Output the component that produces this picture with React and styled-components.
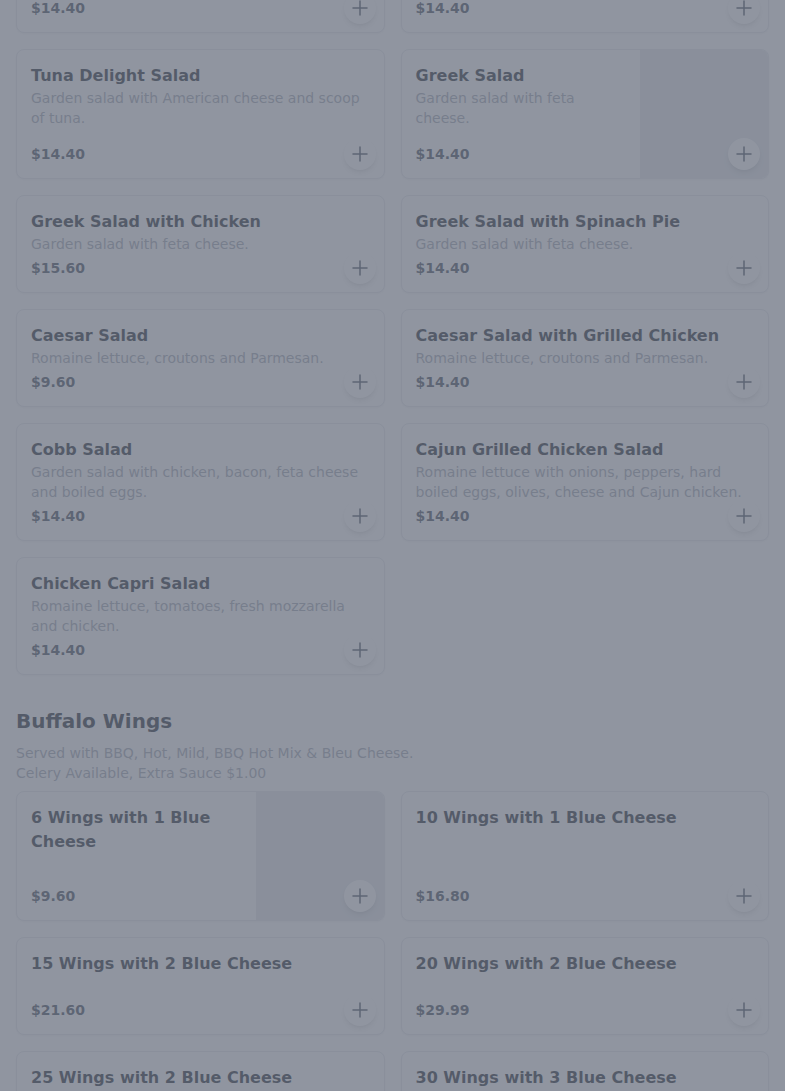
import React, { useLayoutEffect, useRef } from 'react'
import styled, { createGlobalStyle } from 'styled-components'

const GlobalStyle = createGlobalStyle`
  html, body {
    margin: 0;
    padding: 0;
    height: 100%;
    overflow: hidden;
    background: #ffffff;
  }
  * { box-sizing: border-box; }
  #root { height: 100%; }
`

const sections = [
  {
    title: 'Salads',
    note: null,
    items: [
      { name: 'Chef Salad', desc: 'Garden salad with ham, turkey, cheese and boiled eggs.', price: '$14.40' },
      { name: 'Garden Salad with Chicken', desc: 'Garden salad with grilled chicken.', price: '$14.40' },
      { name: 'Tuna Delight Salad', desc: 'Garden salad with American cheese and scoop of tuna.', price: '$14.40', anchor: true },
      { name: 'Greek Salad', desc: 'Garden salad with feta cheese.', price: '$14.40', image: true },
      { name: 'Greek Salad with Chicken', desc: 'Garden salad with feta cheese.', price: '$15.60' },
      { name: 'Greek Salad with Spinach Pie', desc: 'Garden salad with feta cheese.', price: '$14.40' },
      { name: 'Caesar Salad', desc: 'Romaine lettuce, croutons and Parmesan.', price: '$9.60' },
      { name: 'Caesar Salad with Grilled Chicken', desc: 'Romaine lettuce, croutons and Parmesan.', price: '$14.40' },
      { name: 'Cobb Salad', desc: 'Garden salad with chicken, bacon, feta cheese and boiled eggs.', price: '$14.40' },
      { name: 'Cajun Grilled Chicken Salad', desc: 'Romaine lettuce with onions, peppers, hard boiled eggs, olives, cheese and Cajun chicken.', price: '$14.40' },
      { name: 'Chicken Capri Salad', desc: 'Romaine lettuce, tomatoes, fresh mozzarella and chicken.', price: '$14.40' },
    ],
  },
  {
    title: 'Buffalo Wings',
    note: ['Served with BBQ, Hot, Mild, BBQ Hot Mix & Bleu Cheese.', 'Celery Available, Extra Sauce $1.00'],
    items: [
      { name: '6 Wings with 1 Blue Cheese', desc: '', price: '$9.60', image: true },
      { name: '10 Wings with 1 Blue Cheese', desc: '', price: '$16.80' },
      { name: '15 Wings with 2 Blue Cheese', desc: '', price: '$21.60' },
      { name: '20 Wings with 2 Blue Cheese', desc: '', price: '$29.99' },
      { name: '25 Wings with 2 Blue Cheese', desc: '', price: '$36.00' },
      { name: '30 Wings with 3 Blue Cheese', desc: '', price: '$43.20' },
      { name: '40 Wings with 4 Blue Cheese', desc: '', price: '$57.60' },
      { name: '50 Wings with 5 Blue Cheese', desc: '', price: '$72.00' },
    ],
  },
]

const PlusIcon = () => (
  <svg width="24" height="24" viewBox="0 0 24 24" fill="none" stroke="currentColor" strokeWidth="1.5" strokeLinecap="round">
    <path d="M12 5v14M5 12h14" />
  </svg>
)

const App = () => {
  const scrollRef = useRef(null)
  const anchorRef = useRef(null)

  // the menu is shown scrolled so that the Tuna row sits near the top
  useLayoutEffect(() => {
    if (scrollRef.current && anchorRef.current) {
      scrollRef.current.scrollTop = anchorRef.current.offsetTop - 49
    }
  }, [])

  return (
    <>
      <GlobalStyle />
      <Page ref={scrollRef}>
        {sections.map((section) => (
          <Section key={section.title}>
            <SectionTitle>{section.title}</SectionTitle>
            {section.note && (
              <SectionNote>
                {section.note.map((line) => (
                  <div key={line}>{line}</div>
                ))}
              </SectionNote>
            )}
            <Grid>
              {section.items.map((item) => (
                <Card key={item.name} ref={item.anchor ? anchorRef : null} hasImage={item.image}>
                  <Body>
                    <Title>{item.name}</Title>
                    <Desc>{item.desc}</Desc>
                    <Price>{item.price}</Price>
                  </Body>
                  {item.image && <Thumb />}
                  <AddButton aria-label={`Add ${item.name}`}>
                    <PlusIcon />
                  </AddButton>
                </Card>
              ))}
            </Grid>
          </Section>
        ))}
      </Page>
      <Backdrop />
    </>
  )
}

export default App

const Page = styled.main`
  position: relative;
  height: 100%;
  overflow: hidden;
  padding: 16px;
  font-family: "DejaVu Sans", "Liberation Sans", sans-serif;
  color: #111827;
`

const Section = styled.section`
  & + & {
    margin-top: 32px;
  }
`

const SectionTitle = styled.h2`
  margin: 0;
  font-size: 20px;
  line-height: 28px;
  font-weight: 700;
  color: #111827;
`

const SectionNote = styled.div`
  margin-top: 8px;
  font-size: 14px;
  line-height: 20px;
  color: #9ca3af;
`

const Grid = styled.div`
  display: grid;
  grid-template-columns: 1fr 1fr;
  gap: 16px;
  margin-top: 8px;
`

const Card = styled.article.withConfig({ shouldForwardProp: (p) => p !== 'hasImage' })`
  position: relative;
  display: flex;
  min-height: ${({ hasImage }) => (hasImage ? '130px' : '0')};
  background: #ffffff;
  border: 1px solid #e5e7eb;
  border-radius: 8px;
  overflow: hidden;
  box-shadow: 0 1px 2px rgba(0, 0, 0, 0.05);
`

const Body = styled.div`
  flex: 1;
  min-width: 0;
  display: flex;
  flex-direction: column;
  padding: 14px;
`

const Title = styled.h3`
  margin: 0;
  font-size: 16px;
  line-height: 24px;
  font-weight: 700;
  color: #111827;
`

const Desc = styled.p`
  margin: 0;
  min-height: 20px;
  font-size: 14px;
  line-height: 20px;
  color: #9ca3af;
`

const Price = styled.div`
  margin-top: auto;
  padding-top: 4px;
  font-size: 14px;
  line-height: 20px;
  font-weight: 700;
  color: #374151;
`

const Thumb = styled.div`
  width: 128px;
  flex-shrink: 0;
  background: #e5e7eb;
`

const AddButton = styled.button`
  position: absolute;
  right: 8px;
  bottom: 8px;
  width: 32px;
  height: 32px;
  display: flex;
  align-items: center;
  justify-content: center;
  padding: 0;
  border: none;
  border-radius: 50%;
  background: #ffffff;
  color: #374151;
  box-shadow: 0 4px 6px -1px rgba(0, 0, 0, 0.1), 0 2px 4px -2px rgba(0, 0, 0, 0.1);
  cursor: pointer;
`

const Backdrop = styled.div`
  position: fixed;
  inset: 0;
  background: rgba(107, 114, 128, 0.75);
`
